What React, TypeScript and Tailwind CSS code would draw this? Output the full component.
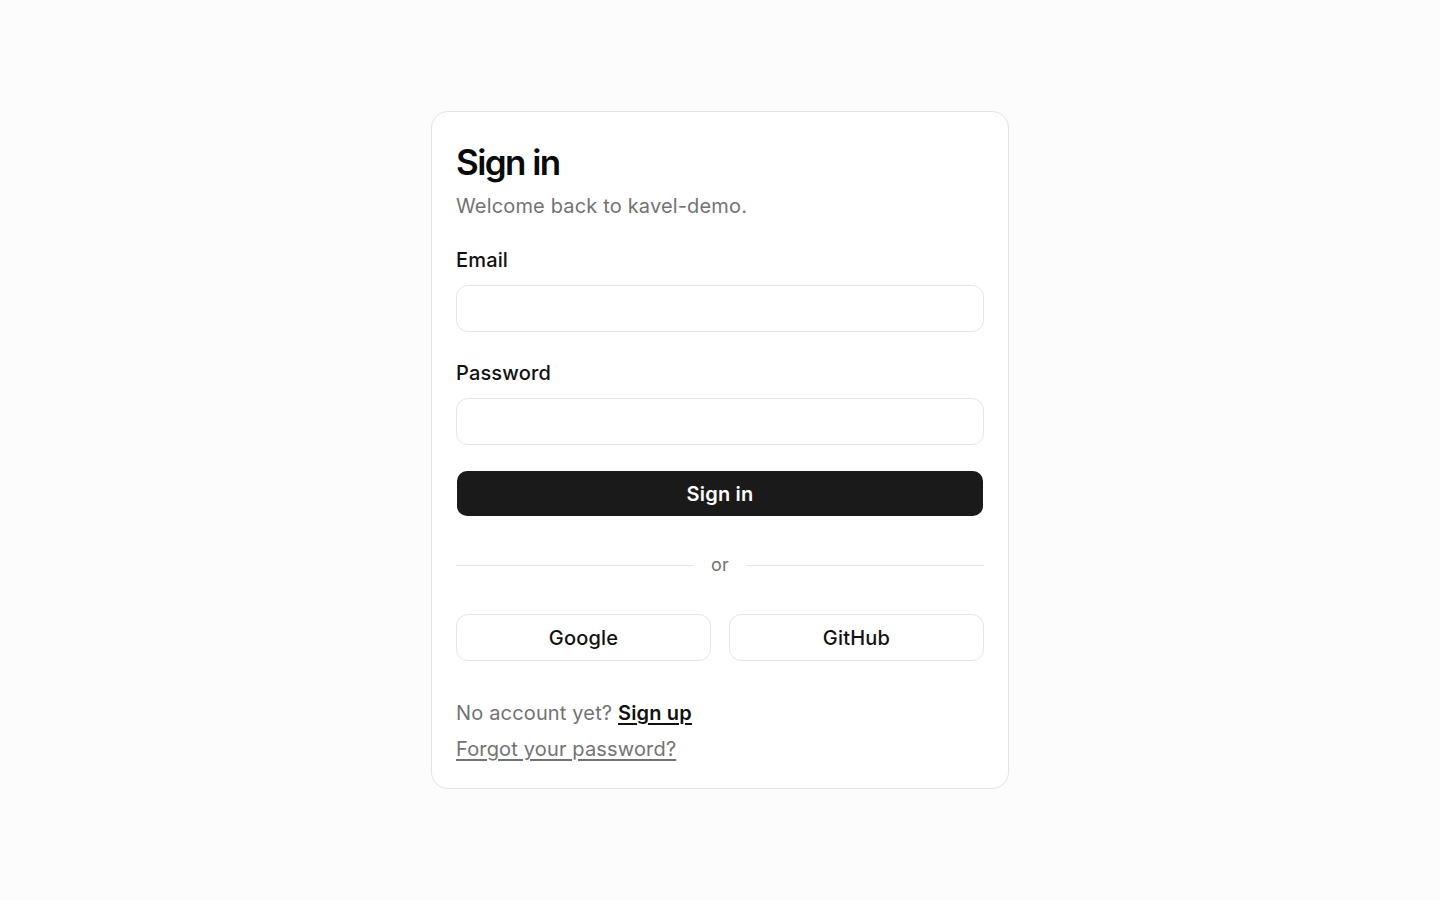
import React from "react";

export default function App() {
  return (
    <div
      className="min-h-screen w-full bg-[#fcfcfc] flex items-center justify-center"
      style={{ fontFamily: 'Inter, "Noto Sans", "Liberation Sans", sans-serif' }}
    >
      <div className="w-[578px] h-[678px] bg-white border border-[#e4e4e4] rounded-[17px] px-6 pt-7 pb-6 flex flex-col tracking-[0.01em]">
        <h1 className="text-[35px] leading-[44px] font-semibold tracking-[-0.045em] text-[#0a0a0a]">
          Sign in
        </h1>
        <p className="mt-2 text-[20px] leading-[28px] text-[#737373]">
          Welcome back to kavel-demo.
        </p>

        <label className="mt-[26px] text-[20px] leading-[28px] font-medium text-[#111111]">
          Email
        </label>
        <input
          type="email"
          className="mt-[11px] h-[47px] w-full rounded-[12px] border border-[#e5e5e5] bg-white px-4 text-[20px] outline-none"
        />

        <label className="mt-[27px] text-[20px] leading-[28px] font-medium text-[#111111]">
          Password
        </label>
        <input
          type="password"
          className="mt-[11px] h-[47px] w-full rounded-[12px] border border-[#e5e5e5] bg-white px-4 text-[20px] outline-none"
        />

        <button className="mt-[26px] mx-px h-[45px] rounded-[10px] bg-[#1a1a1a] text-white text-[20px] font-semibold tracking-[0.01em]">
          Sign in
        </button>

        <div className="mt-[37px] h-[24px] flex items-center gap-[18px]">
          <div className="flex-1 h-px bg-[#e5e5e5]" />
          <span className="text-[18px] leading-[24px] text-[#737373]">or</span>
          <div className="flex-1 h-px bg-[#e5e5e5]" />
        </div>

        <div className="mt-[37px] grid grid-cols-2 gap-[18px]">
          <button className="h-[47px] rounded-[12px] border border-[#e5e5e5] bg-white text-[20px] font-medium text-[#111111] tracking-[0.01em]">
            Google
          </button>
          <button className="h-[47px] rounded-[12px] border border-[#e5e5e5] bg-white text-[20px] font-medium text-[#111111] tracking-[0.01em]">
            GitHub
          </button>
        </div>

        <p className="mt-[38px] text-[20px] leading-[28px] text-[#737373]">
          No account yet?{" "}
          <a href="#" className="font-semibold text-[#111111] underline underline-offset-[3px]">
            Sign up
          </a>
        </p>
        <a
          href="#"
          className="mt-[8px] self-start text-[20px] leading-[28px] text-[#737373] underline underline-offset-[3px]"
        >
          Forgot your password?
        </a>
      </div>
    </div>
  );
}
